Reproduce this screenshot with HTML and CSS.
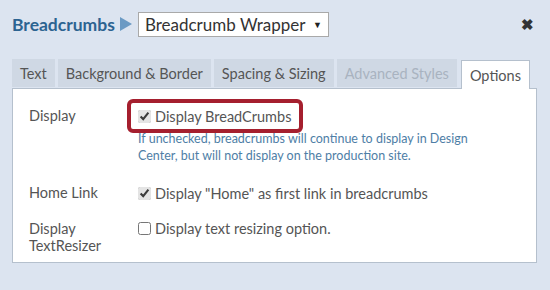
FILE: index.html
```html
<!DOCTYPE html>
<html>
<head>
    <meta charset="utf-8">
    <title>Breadcrumbs</title>
    <link rel="stylesheet" href="styles.css">
</head>
<body>
<div id="dialog">
    <div class="head">
        <span class="crumb">Breadcrumbs</span>
        <span class="arrow"></span>
        <div class="picker">Breadcrumb Wrapper <span class="caret">&#9660;</span></div>
        <span class="close">&#10006;</span>
    </div>

    <div class="tabs">
        <div class="tab">Text</div>
        <div class="tab">Background &amp; Border</div>
        <div class="tab">Spacing &amp; Sizing</div>
        <div class="tab disabled">Advanced Styles</div>
        <div class="tab active">Options</div>
    </div>

    <div class="panel">
        <div class="row first">
            <div class="label">Display</div>
            <div class="field">
                <label class="check hl"><input type="checkbox" checked> Display BreadCrumbs</label>
                <div class="note">If unchecked, breadcrumbs will continue to display in Design Center, but will not display on the production site.</div>
            </div>
        </div>
        <div class="row">
            <div class="label">Home Link</div>
            <div class="field">
                <label class="check"><input type="checkbox" checked> Display "Home" as first link in breadcrumbs</label>
            </div>
        </div>
        <div class="row last">
            <div class="label">Display<br>TextResizer</div>
            <div class="field">
                <label class="check"><input type="checkbox"> Display text resizing option.</label>
            </div>
        </div>
    </div>
</div>
</body>
</html>
```

FILE: styles.css
```css
body {
    margin: 0;
    background: #dce4f0;
    font-family: Lato, "Open Sans", sans-serif;
    color: #555;
}

#dialog {
    width: 550px;
    height: 290px;
}

.head {
    display: flex;
    align-items: center;
    height: 48px;
    padding: 0 16px 0 12px;
}

.crumb {
    font-size: 17.5px;
    font-weight: bold;
    color: #2c6391;
}

.arrow {
    width: 0;
    height: 0;
    border-top: 7px solid transparent;
    border-bottom: 7px solid transparent;
    border-left: 12px solid #6b9ac4;
    margin: 0 6px 0 5px;
}

.picker {
    display: flex;
    align-items: center;
    justify-content: space-between;
    width: 177px;
    height: 23px;
    padding: 0 6px;
    background: #fff;
    border: 1px solid #a9a9a9;
    font-size: 17px;
    color: #333;
}

.caret {
    font-size: 9px;
    color: #222;
}

.close {
    margin-left: auto;
    font-size: 15px;
    font-weight: bold;
    color: #333;
}

.tabs {
    display: flex;
    gap: 3px;
    padding: 11px 0 0 12px;
}

.tab {
    height: 28px;
    line-height: 29px;
    padding: 0 8px;
    background: #cfd8e4;
    font-size: 14.5px;
    color: #555;
}

.tab.disabled {
    color: #a9b3c0;
}

.tab.active {
    background: #fff;
    border: 1px solid #b5c0cd;
    border-bottom: none;
    margin-left: 1px;
    position: relative;
    top: 1px;
}

.panel {
    margin: 0 13px 0 12px;
    height: 173px;
    background: #fff;
    border: 1px solid #b5c0cd;
}

.row {
    display: flex;
    padding: 12px 0 0 16px;
    font-size: 14.5px;
}

.row.first {
    padding-top: 18px;
}

.row.last {
    padding-top: 17px;
}

.label {
    width: 109px;
    line-height: 17px;
}

.field {
    flex: 1;
}

.check {
    display: inline-flex;
    align-items: center;
    gap: 4px;
    height: 18px;
}

.check input {
    margin: 0;
    width: 13px;
    height: 13px;
    accent-color: #e4e4e4;
}

.hl {
    display: flex;
    width: max-content;
    border: 4px solid #a51f2e;
    border-radius: 6px;
    padding: 4px 8px 4px 7px;
    margin: -8px 0 -8px -11px;
}

.note {
    margin-top: 5px;
    font-size: 12.5px;
    line-height: 17px;
    color: #4e7ea6;
    width: 340px;
    padding-bottom: 8px;
}
```
